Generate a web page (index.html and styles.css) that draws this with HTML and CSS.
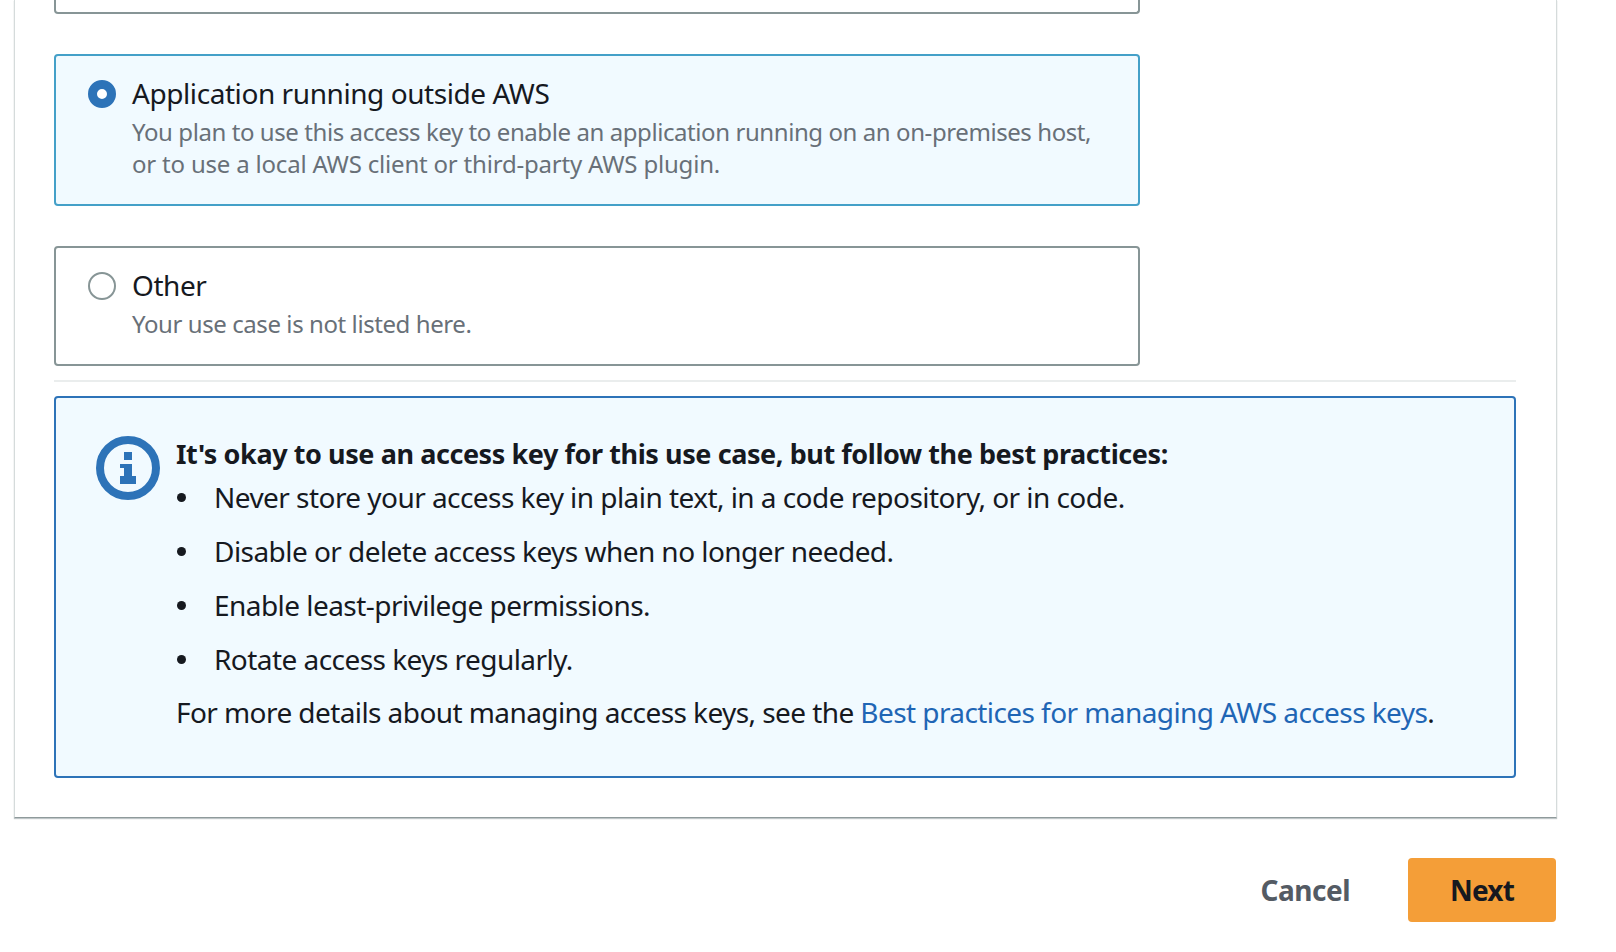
FILE: index.html
```html
<!DOCTYPE html>
<html lang="en">
<head>
    <meta charset="UTF-8">
    <meta name="viewport" content="width=device-width, initial-scale=1.0">
    <title>Access key best practices</title>
    <link rel="stylesheet" href="styles.css">
</head>
<body>
    <main class="page">
        <section class="panel">
            <div class="option option-cut"></div>

            <label class="option option-selected">
                <span class="radio radio-on"></span>
                <span class="option-text">
                    <span class="option-title">Application running outside AWS</span>
                    <span class="option-desc">You plan to use this access key to enable an application running on an on-premises host,<br><span class="desc-wide">or to use a local AWS client or third-party AWS plugin.</span></span>
                </span>
            </label>

            <label class="option option-other">
                <span class="radio"></span>
                <span class="option-text">
                    <span class="option-title">Other</span>
                    <span class="option-desc">Your use case is not listed here.</span>
                </span>
            </label>

            <hr class="divider">

            <div class="alert">
                <svg class="alert-icon" viewBox="0 0 16 16" aria-hidden="true">
                    <circle cx="8" cy="8" r="7" fill="none" stroke="#2d73b8" stroke-width="2"/>
                    <path d="M7 4h2v2H7z M6 7h3v3h1v2H6v-2h1V8H6z" fill="#2d73b8"/>
                </svg>
                <div class="alert-body">
                    <h2 class="alert-title">It's okay to use an access key for this use case, but follow the best practices:</h2>
                    <ul class="alert-list">
                        <li>Never store your access key in plain text, in a code repository, or in code.</li>
                        <li>Disable or delete access keys when no longer needed.</li>
                        <li>Enable least-privilege permissions.</li>
                        <li>Rotate access keys regularly.</li>
                    </ul>
                    <p class="alert-more">For more details about managing access keys, see the <a href="#">Best practices for managing AWS access keys</a>.</p>
                </div>
            </div>
        </section>

        <div class="actions">
            <button type="button" class="btn btn-cancel">Cancel</button>
            <button type="button" class="btn btn-next">Next</button>
        </div>
    </main>
</body>
</html>
```

FILE: styles.css
```css
body { margin: 0; background: #fff; font-family: "Noto Sans", Arial, sans-serif; color: #16191f; overflow: hidden; }
.page { width: 1543px; margin-left: 14px; }

.panel { padding: 0 40px 39px 39px; border: 1px solid #d5dbdb; border-top: 0; border-bottom-color: #8f9a9b; box-shadow: 0 1px 1px rgba(0, 28, 36, 0.25); background: #fff; }

.option { display: flex; gap: 16px; width: 1086px; box-sizing: border-box; border: 2px solid #879596; border-radius: 4px; padding: 24px 32px; }
.option-cut { height: 14px; padding: 0; border-top: 0; border-radius: 0 0 4px 4px; margin-bottom: 40px; }
.option-selected { height: 152px; border-color: #44a0c8; background: #f1faff; margin-bottom: 40px; }
.option-other { height: 120px; }

.radio { flex: none; width: 28px; height: 28px; box-sizing: border-box; border: 2px solid #879596; border-radius: 50%; background: #fff; }
.radio-on { border: 9px solid #2d73b8; }

.option-text { display: block; margin-top: -5px; }
.option-title { display: block; font-size: 28px; line-height: 36px; letter-spacing: -0.43px; }
.option-desc { display: block; font-size: 24px; line-height: 32px; letter-spacing: -0.42px; color: #687078; margin-top: 5px; }
.desc-wide { letter-spacing: -0.2px; }

.divider { width: 1462px; height: 2px; border: 0; background: #eaeded; margin: 14px 0 14px; }

.alert { display: flex; gap: 16px; box-sizing: border-box; height: 382px; border: 2px solid #2d73b8; border-radius: 4px; background: #f1faff; padding: 38px 40px; }
.alert-icon { flex: none; width: 64px; height: 64px; }
.alert-body { font-size: 28px; line-height: 36px; letter-spacing: -0.55px; white-space: nowrap; }
.alert-title { margin: 0; font-size: 27px; line-height: 36px; font-weight: 700; letter-spacing: -0.42px; }
.alert-list { margin: -1px 0 0; padding: 0; list-style: none; }
.alert-list li { display: flex; align-items: center; margin-top: 8px; padding-bottom: 10px; }
.alert-list li::before { content: ""; flex: none; width: 9px; height: 9px; border-radius: 50%; background: #16191f; margin: 0 28px 0 1px; }
.alert-more { margin: 7px 0 0; letter-spacing: -0.58px; }
.alert-more a { color: #1f66b5; text-decoration: none; }

.actions { display: flex; justify-content: flex-end; align-items: center; gap: 29px; margin: 40px 1px 0 0; }
.btn { height: 64px; border: 0; border-radius: 4px; background: none; font-family: inherit; font-size: 28px; font-weight: 700; }
.btn-cancel { padding: 0 29px; color: #545b64; letter-spacing: -0.5px; }
.btn-next { width: 148px; background: #f49e38; color: #16191f; letter-spacing: -0.8px; }
```
